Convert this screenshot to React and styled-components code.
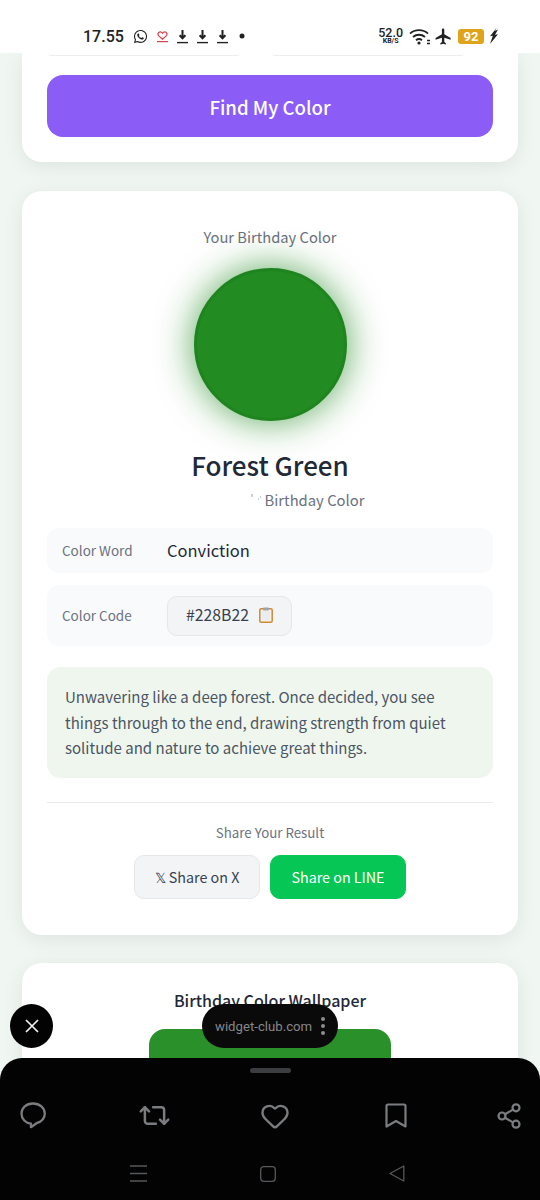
import React from 'react';
import styled, { createGlobalStyle } from 'styled-components';
import { FaWhatsapp } from 'react-icons/fa';
import { MdFlight } from 'react-icons/md';
import { Repeat2, Heart, Share2 } from 'lucide-react';

const Global = createGlobalStyle`
  * { box-sizing: border-box; }
  html, body { margin: 0; padding: 0; background: #f0f7f2; }
  body { font-family: "Noto Sans CJK JP", "Noto Sans", sans-serif; }
`;

const Screen = styled.div`
  position: relative;
  width: 540px;
  height: 1200px;
  overflow: hidden;
  display: flex;
  flex-direction: column;
  background: #f0f7f2;
`;

const StatusBar = styled.div`
  height: 53px;
  flex: none;
  background: #fff;
  padding: 19px 41px 0 83px;
  display: flex;
  align-items: center;
  justify-content: space-between;
  color: #222;
  position: relative;
  z-index: 2;
`;

const StatusGroup = styled.div`
  display: flex;
  align-items: center;
  gap: ${p => p.$gap || 6}px;
`;

const Time = styled.span`
  font: 500 16px "Roboto", sans-serif;
`;

const Speed = styled.div`
  display: flex;
  flex-direction: column;
  align-items: center;
  margin-right: 1px;
  font-family: "Roboto", sans-serif;
  font-weight: 500;
  font-size: 12.5px;
  line-height: 10px;
  span { font-size: 7px; line-height: 6px; font-weight: 700; }
`;

const Battery = styled.div`
  width: 26px;
  height: 15px;
  border-radius: 3px;
  background: #e0a31c;
  color: #fff;
  font: 700 13px/15px "Roboto", sans-serif;
  text-align: center;
`;

const Content = styled.main`
  flex: 1;
  min-height: 0;
  overflow: hidden;
  padding: 0 22px;
  display: flex;
  flex-direction: column;
  gap: 28px;
`;

const Card = styled.section`
  flex: none;
  background: #fff;
  border-radius: 20px;
  padding: ${p => p.$pad || '25px'};
  box-shadow: 0 4px 20px rgba(0, 0, 0, 0.08);
  display: flex;
  flex-direction: column;
`;

const FormCard = styled(Card)`
  border-radius: 0 0 20px 20px;
  padding: 0 25px 25px;
  margin-bottom: 1px;
`;

const SelectRow = styled.div`
  display: flex;
  gap: 32px;
  padding: 0 1px;
  margin-bottom: 19px;
`;

const SelectStub = styled.div`
  width: 192px;
  height: 3px;
  border-bottom: 1px solid #eceef0;
  border-radius: 0 0 10px 10px;
`;

const FindButton = styled.button`
  height: 62px;
  border: 0;
  border-radius: 16px;
  background: #8b5cf6;
  color: #fff;
  font: 500 18.6px "Noto Sans CJK JP", sans-serif;
`;

const Eyebrow = styled.div`
  text-align: center;
  color: #6b7280;
  font-size: 14.7px;
  line-height: 22px;
`;

const Swatch = styled.div`
  width: 153px;
  height: 153px;
  margin: 20px auto 0;
  border-radius: 50%;
  background: ${p => p.$color};
  border: 3px solid #1f8420;
  box-shadow: 0 0 36px ${p => p.$color}bb, 0 0 70px rgba(34, 139, 34, 0.04);
`;

const ColorName = styled.h2`
  margin: 23px 0 0;
  text-align: center;
  color: #1f2937;
  font-size: 26px;
  font-weight: 500;
  line-height: 42px;
`;

const Subtitle = styled.div`
  margin-top: 2px;
  display: flex;
  justify-content: center;
  align-items: center;
  gap: 3px;
  color: #6b7280;
  font-size: 14.8px;
  line-height: 24px;
`;

const SubtitleMark = styled.svg`
  margin-left: 74px;
  margin-bottom: 5px;
`;

const InfoRow = styled.div`
  margin-top: ${p => p.$top || 12}px;
  height: ${p => p.$h}px;
  background: #f9fafb;
  border-radius: 12px;
  padding: 0 15px 1px;
  display: flex;
  align-items: center;
`;

const InfoLabel = styled.span`
  width: 105px;
  color: #6b7280;
  font-size: 13.5px;
  line-height: 20px;
`;

const InfoValue = styled.span`
  color: #1f2937;
  font-size: 16.5px;
  line-height: 24px;
`;

const CodeChip = styled.div`
  height: 40px;
  width: 125px;
  margin-bottom: -1px;
  border: 1px solid #e5e7eb;
  border-radius: 10px;
  background: #f3f4f6;
  color: #374151;
  font-size: 15.8px;
  line-height: 20px;
  padding-bottom: 2px;
  display: flex;
  align-items: center;
  justify-content: center;
  gap: 10px;
`;

const Description = styled.p`
  margin: 21px 0 0;
  padding: 17px 18px;
  background: #eff6ee;
  border-radius: 14px;
  color: #4b5563;
  font-size: 15px;
  line-height: 25.7px;
`;

const Divider = styled.hr`
  margin: 24px 0 0;
  border: 0;
  border-top: 1.5px solid #e8eaed;
`;

const ShareLabel = styled.div`
  margin-top: 20px;
  text-align: center;
  color: #6b7280;
  font-size: 13.3px;
  line-height: 20px;
`;

const ShareRow = styled.div`
  margin-top: 12px;
  display: flex;
  justify-content: center;
  gap: 10px;
`;

const ShareButton = styled.button`
  height: 44px;
  width: ${p => p.$w}px;
  border-radius: 10px;
  border: 1px solid ${p => (p.$line ? '#06c755' : '#e5e7eb')};
  background: ${p => (p.$line ? '#06c755' : '#f3f4f6')};
  color: ${p => (p.$line ? '#fff' : '#374151')};
  font: 400 14.3px "Noto Sans CJK JP", sans-serif;
  padding: 0 0 2px;
`;

const WallpaperTitle = styled.h3`
  margin: 0;
  text-align: center;
  color: #1f2937;
  font-size: 16px;
  font-weight: 500;
  line-height: 26px;
`;

const WallpaperPreview = styled.div`
  width: 242px;
  height: 120px;
  margin: 16px auto 0;
  border-radius: 16px;
  background: #2a912a;
`;

const Sheet = styled.div`
  flex: none;
  height: 142px;
  margin-top: -1px;
  background: #030303;
  border-radius: 22px 22px 0 0;
  position: relative;
  z-index: 2;
  display: flex;
  flex-direction: column;
  align-items: center;
`;

const Handle = styled.div`
  width: 41px;
  height: 5px;
  margin-top: 10px;
  border-radius: 3px;
  background: #3b3d40;
`;

const ActionRow = styled.div`
  align-self: flex-start;
  margin: 26px 0 0 -27.5px;
  display: grid;
  grid-template-columns: repeat(4, 121px) 105px;
  align-items: center;
  justify-items: center;
  color: #7a7c7f;
`;

const NavRow = styled.div`
  margin: 33px 5px 0 0;
  display: flex;
  align-items: center;
  color: #56585b;
  gap: 113px;
`;

const CloseButton = styled.div`
  position: absolute;
  left: 10px;
  top: 1004px;
  width: 43px;
  height: 44px;
  border-radius: 50%;
  background: #030303;
  display: flex;
  align-items: center;
  justify-content: center;
  z-index: 3;
`;

const UrlPill = styled.div`
  position: absolute;
  left: 202px;
  top: 1004px;
  width: 136px;
  height: 44px;
  border-radius: 22px;
  background: #0a0a0a;
  color: #85878a;
  font: 400 13.2px "Roboto", sans-serif;
  display: flex;
  align-items: center;
  padding-left: 13px;
  gap: 9px;
  z-index: 3;
`;

const Dots = styled.div`
  display: flex;
  flex-direction: column;
  gap: 3px;
  i { width: 4px; height: 4px; border-radius: 50%; background: #8b8d90; display: block; }
`;

const WifiSvg = styled.svg`
  margin-right: -2px;
`;

const DownloadIcon = () => (
  <svg width="11" height="15" viewBox="0 0 11 15">
    <path d="M5.5 1v7.5M2.6 6.2l2.9 3 2.9-3" fill="none" stroke="#222" strokeWidth="2" />
    <path d="M0 13.6h11" stroke="#222" strokeWidth="1.4" />
  </svg>
);

const LoveIcon = () => (
  <svg width="11" height="13" viewBox="0 0 11 13" fill="none" stroke="#d9404b" strokeWidth="1.2">
    <path d="M5.5 9.2 1.6 5.6C.3 4.2 1.2 1.8 3.2 1.8c1 0 1.8.6 2.3 1.5.5-.9 1.3-1.5 2.3-1.5 2 0 2.9 2.4 1.6 3.8Z" />
    <path d="M0 11.6h11" />
  </svg>
);

const WifiIcon = () => (
  <WifiSvg width="22" height="17" viewBox="0 0 22 17" fill="none" stroke="#222" strokeWidth="1.8">
    <path d="M1 5.6c5-4.6 13-4.6 18 0" />
    <path d="M4 9c3.4-3 8.600-3 12 0" />
    <path d="M7 12.200c1.800-1.500 4.200-1.500 6 0" />
    <circle cx="10" cy="15" r="1.600" fill="#222" stroke="none" />
    <path d="M18 12.500h3M18 15.500h3" strokeWidth="1.600" />
  </WifiSvg>
);

const BoltIcon = () => (
  <svg width="10" height="16" viewBox="0 0 10 16">
    <path d="M7.500 0 1 8.200l2.800-.5L1 16l8-9.800-3 .5L9 1.500 6 3Z" fill="#222" />
  </svg>
);

const ClipboardIcon = () => (
  <svg width="14" height="16" viewBox="0 0 14 16">
    <rect x="0.800" y="1.800" width="12.400" height="13.400" rx="1.500" fill="#fff2dc" stroke="#c98a3c" strokeWidth="1.500" />
    <rect x="2.800" y="4" width="8.400" height="9.500" fill="#e7edf3" />
    <rect x="4" y="0.500" width="6" height="3" rx="0.800" fill="#9aa4ae" />
  </svg>
);

const CommentIcon = () => (
  <svg width="26" height="27" viewBox="0 0 26 27" fill="none" stroke="currentColor" strokeWidth="2.300" strokeLinejoin="round">
    <path d="M13 1.500C6.400 1.500 1.500 5.800 1.500 11.600c0 5.400 4.200 9.600 9.400 10v3.600l5.600-4c5-1.400 8.300-5 8.300-9.600C24.800 5.800 19.600 1.500 13 1.500Z" />
  </svg>
);

const BookmarkIcon = () => (
  <svg width="22" height="25" viewBox="0 0 22 25" fill="none" stroke="currentColor" strokeWidth="2.200" strokeLinejoin="round">
    <path d="M1.500 3c0-.9.600-1.500 1.500-1.500h16c.9 0 1.500.6 1.500 1.500v20.500L11 18 1.500 23.500Z" />
  </svg>
);

const MenuIcon = () => (
  <svg width="17" height="17" viewBox="0 0 17 17" stroke="currentColor" strokeWidth="1.300">
    <path d="M0 1h17M0 8.500h17M0 16h17" />
  </svg>
);

const SquareIcon = () => (
  <svg width="16" height="16" viewBox="0 0 16 16" fill="none" stroke="currentColor" strokeWidth="1.300">
    <rect x="0.700" y="0.700" width="14.600" height="14.600" rx="3" />
  </svg>
);

const BackIcon = () => (
  <svg width="16" height="17" viewBox="0 0 16 17" fill="none" stroke="currentColor" strokeWidth="1.300" strokeLinejoin="round">
    <path d="M14.800 1 1 8.500 14.800 16Z" />
  </svg>
);

const CloseIcon = () => (
  <svg width="16" height="16" viewBox="0 0 16 16" stroke="#f2f2f2" strokeWidth="1.700">
    <path d="M2 2l12 12M14 2 2 14" />
  </svg>
);

const App = () => {
  const color = '#228B22';
  return (
    <Screen>
      <Global />
      <StatusBar>
        <StatusGroup $gap={9}>
          <Time>17.55</Time>
          <FaWhatsapp size={15} />
          <LoveIcon />
          <DownloadIcon />
          <DownloadIcon />
          <DownloadIcon />
          <svg width="14" height="6" viewBox="0 0 14 6"><circle cx="5" cy="3" r="2.500" fill="#222" /></svg>
        </StatusGroup>
        <StatusGroup $gap={5}>
          <Speed>52.0<span>KB/S</span></Speed>
          <WifiIcon />
          <MdFlight size={19} />
          <Battery>92</Battery>
          <BoltIcon />
        </StatusGroup>
      </StatusBar>

      <Content>
        <FormCard>
          <SelectRow>
            <SelectStub />
            <SelectStub />
          </SelectRow>
          <FindButton>Find My Color</FindButton>
        </FormCard>

        <Card $pad="35px 25px 36px">
          <Eyebrow>Your Birthday Color</Eyebrow>
          <Swatch $color={color} />
          <ColorName>Forest Green</ColorName>
          <Subtitle>
            <SubtitleMark width="12" height="8" viewBox="0 0 12 8">
              <path d="M2 0v3M8 5h1M10 3h1" stroke="#9ca3af" strokeWidth="1" />
            </SubtitleMark>
            Birthday Color
          </Subtitle>
          <InfoRow $top={16} $h={45}>
            <InfoLabel>Color Word</InfoLabel>
            <InfoValue>Conviction</InfoValue>
          </InfoRow>
          <InfoRow $h={61}>
            <InfoLabel>Color Code</InfoLabel>
            <CodeChip>{color}<ClipboardIcon /></CodeChip>
          </InfoRow>
          <Description>
            Unwavering like a deep forest. Once decided, you see things through to the end, drawing strength from quiet solitude and nature to achieve great things.
          </Description>
          <Divider />
          <ShareLabel>Share Your Result</ShareLabel>
          <ShareRow>
            <ShareButton $w={126}>𝕏 Share on X</ShareButton>
            <ShareButton $w={136} $line>Share on LINE</ShareButton>
          </ShareRow>
        </Card>

        <Card $pad="24px 25px 25px">
          <WallpaperTitle>Birthday Color Wallpaper</WallpaperTitle>
          <WallpaperPreview />
        </Card>
      </Content>

      <CloseButton><CloseIcon /></CloseButton>
      <UrlPill>
        widget-club.com
        <Dots><i /><i /><i /></Dots>
      </UrlPill>

      <Sheet>
        <Handle />
        <ActionRow>
          <CommentIcon />
          <Repeat2 size={33} strokeWidth={1.800} />
          <Heart size={30} strokeWidth={1.900} />
          <BookmarkIcon />
          <Share2 size={28} strokeWidth={1.900} />
        </ActionRow>
        <NavRow>
          <MenuIcon />
          <SquareIcon />
          <BackIcon />
        </NavRow>
      </Sheet>
    </Screen>
  );
};

export default App;
